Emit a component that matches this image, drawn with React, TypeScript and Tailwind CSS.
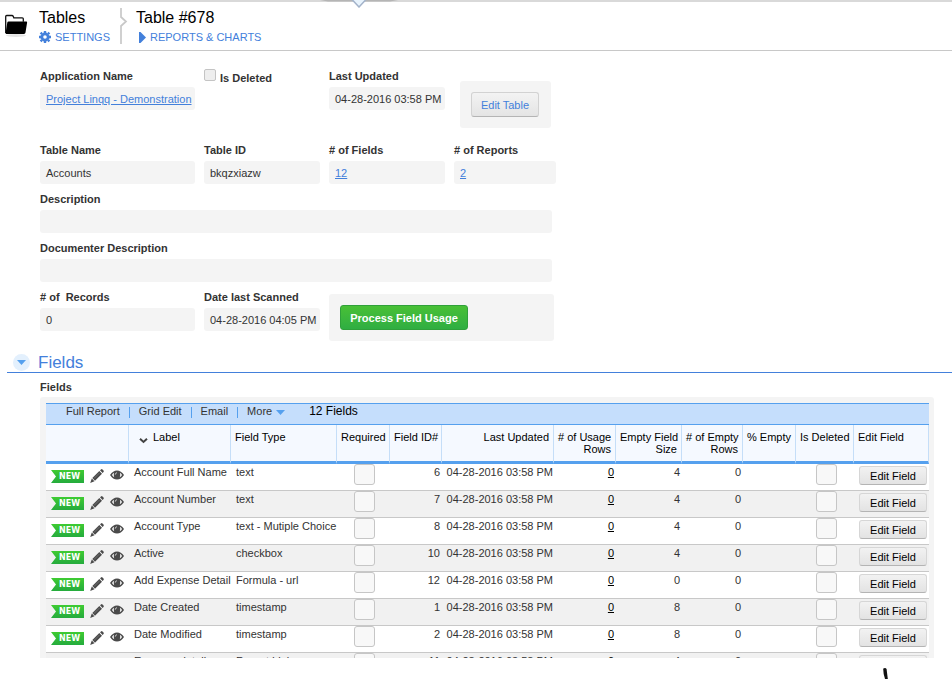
import React from 'react';

interface FieldRow {
  label: string;
  type: string;
  id: number;
  emptySize: number;
}

const UPDATED = '04-28-2016 03:58 PM';

const rows: FieldRow[] = [
  { label: 'Account Full Name', type: 'text', id: 6, emptySize: 4 },
  { label: 'Account Number', type: 'text', id: 7, emptySize: 4 },
  { label: 'Account Type', type: 'text - Mutiple Choice', id: 8, emptySize: 4 },
  { label: 'Active', type: 'checkbox', id: 10, emptySize: 4 },
  { label: 'Add Expense Detail', type: 'Formula - url', id: 12, emptySize: 0 },
  { label: 'Date Created', type: 'timestamp', id: 1, emptySize: 8 },
  { label: 'Date Modified', type: 'timestamp', id: 2, emptySize: 8 },
  { label: 'Expense details', type: 'Report Link', id: 11, emptySize: 4 },
];

const FolderIcon = () => (
  <svg className="w-6 h-6 shrink-0" viewBox="0 0 24 24">
    <ellipse cx="12" cy="22.5" rx="10" ry="1.5" fill="#e4e4e4" />
    <path d="M1.7 20V3.5q0-1 1-1h5.2q1 0 1.4 1l.5 1.3h8.5q1 0 1 1v3" fill="#fff" stroke="#111" strokeWidth="1.3" />
    <path d="M4.5 8.6h17.8q1 0 .8 1l-1.6 10q-.2 1.4-1.5 1.4H2.4q-1 0-.8-1L3.3 9.6q.2-1 1.2-1Z" fill="#000" />
  </svg>
);

const GearIcon = () => (
  <svg className="w-3 h-3 shrink-0" viewBox="0 0 12 12">
    <circle cx="6" cy="6" r="3.2" fill="none" stroke="#4380db" strokeWidth="2.8" />
    <path
      d="M6 0v2M6 10v2M0 6h2M10 6h2M1.6 1.6l1.4 1.4M9 9l1.4 1.4M1.6 10.4l1.4-1.4M9 3l1.4-1.4"
      stroke="#4380db"
      strokeWidth="2.4"
    />
  </svg>
);

const PencilIcon = () => (
  <svg className="w-[14px] h-[14px]" viewBox="0 0 14 14" fill="#4a4a4a">
    <path d="M9.3 2 12 4.700 5 11.700 2.300 9Z" />
    <path d="M10 1.300 11 .4q.8-.7 1.500 0l1 1q.7.8 0 1.500l-.9 1Z" />
    <path d="M1.800 9.500 4.500 12.200.2 13.900Z" />
    <path d="M4 9.500 9.500 4" stroke="#8a8a8a" strokeWidth=".6" />
  </svg>
);

const EyeIcon = () => (
  <svg className="w-[14px] h-[10px]" viewBox="0 0 14 10">
    <path d="M0 5Q3 .4 7 .4T14 5Q11 9.600 7 9.600T0 5Z" fill="#4a4a4a" />
    <path d="M2 5Q2.700 3.600 4 2.800 3.400 5 4.200 7.300 2.700 6.400 2 5ZM12 5Q11.300 3.600 10 2.800 10.600 5 9.800 7.300 11.300 6.400 12 5Z" fill="#fff" />
    <path d="M5.300 4.600Q5.300 3 6.900 2.700" stroke="#ddd" strokeWidth=".9" fill="none" />
  </svg>
);

const NewBadge = () => (
  <span className="relative block w-[33px] h-[13px]">
    <svg className="absolute inset-0 w-full h-full" viewBox="0 0 33 13">
      <defs>
        <linearGradient id="ribbon" x1="0" y1="0" x2="0" y2="1">
          <stop offset="0" stopColor="#3ecb32" />
          <stop offset="1" stopColor="#25ab3d" />
        </linearGradient>
      </defs>
      <path d="M0 0H33V13H0L5 6.500Z" fill="url(#ribbon)" />
    </svg>
    <span className="relative block pl-2 text-[8px] leading-[14px] font-bold text-white font-['DejaVu_Sans',sans-serif]">
      NEW
    </span>
  </span>
);

const CaretDown: React.FC<{ className?: string }> = ({ className }) => (
  <svg className={className} viewBox="0 0 9 5" fill="#55a0ee">
    <path d="M0 0H9L4.500 5Z" />
  </svg>
);

const Separator = () => <span className="mx-[9px] mt-[3px] h-[11px] w-px bg-[#55a0ee]" />;

const Field: React.FC<{ label: string; className?: string; children?: React.ReactNode }> = ({
  label,
  className = '',
  children,
}) => (
  <div className={className}>
    <div className="leading-[14px] font-bold whitespace-pre">{label}</div>
    <div className="mt-1 h-[23px] rounded-[3px] bg-[#f4f4f4] px-[6px] leading-[24px] whitespace-nowrap">{children}</div>
  </div>
);

const TableCheckbox: React.FC<{ label: string }> = ({ label }) => (
  <input
    type="checkbox"
    aria-label={label}
    className="block mx-auto w-[21px] h-[21px] appearance-none rounded-[3px] border border-[#c6c6c6] bg-[#f8f8f8]"
  />
);

const th = 'h-[39px] pt-[6px] px-1 align-top font-normal leading-[12px] text-black whitespace-nowrap border-r border-r-[#c5def8] border-b-3 border-b-[#55a0ee] bg-[#f5f9ff]';
const td = 'h-[27px] p-0 align-top leading-[16px] whitespace-nowrap border-b border-[#c8c8c8]';
const link = 'text-[#4380db] underline';

export default function App() {
  return (
    <div className="overflow-hidden bg-white text-[11px] text-[#333] font-['Liberation_Sans',Arial,sans-serif]">
      <header className="relative flex h-[51px] border-t-2 border-t-[#d9d9d9] border-b border-b-[#c8c8c8] pl-1">
        <svg className="absolute left-[320px] -top-[2px] w-[78px] h-2" viewBox="0 0 78 8">
          <path d="M0 0H78L70 1.500H8Z" fill="#b5b5b5" />
          <path d="M31.500 -1 39 7 46.500 -1Z" fill="#e8f3fc" stroke="#a3b3ca" strokeWidth="1.500" />
        </svg>
        <div className="mt-[11px]">
          <FolderIcon />
        </div>
        <div className="ml-[11px] w-[81px] pt-[6px]">
          <h1 className="text-base leading-[20px] text-black">Tables</h1>
          <a href="#settings" className="mt-[1px] flex items-center gap-1 leading-[16px] text-[#4380db]">
            <GearIcon />
            SETTINGS
          </a>
        </div>
        <svg className="mt-[6px] w-2 h-9 shrink-0" viewBox="0 0 8 36" fill="none">
          <path d="M1 0V9L6 13.500 1 18V36" stroke="#c8c8c8" strokeWidth="1.700" />
        </svg>
        <div className="ml-2 pt-[6px]">
          <h2 className="text-base leading-[20px] text-black">Table #678</h2>
          <a href="#reports" className="mt-[1px] flex items-center gap-1 pl-[3px] leading-[16px] text-[#4380db]">
            <svg className="w-[7px] h-[11px]" viewBox="0 0 7 11" fill="#4380db">
              <path d="M0 0H1.500L7 5.500 1.500 11H0Z" />
            </svg>
            REPORTS &amp; CHARTS
          </a>
        </div>
      </header>

      <main>
        <section className="pt-[18px] pl-10">
          <div className="flex items-start gap-[9px]">
            <Field label="Application Name" className="w-[155px]">
              <a href="#application" className={link}>Project Linqq - Demonstration</a>
            </Field>
            <label className="flex w-[116px] items-start gap-1 font-bold leading-[18px]">
              <input
                type="checkbox"
                className="w-3 h-3 appearance-none rounded-[2px] border border-[#c4c4c4] bg-[#eeeeee]"
              />
              Is Deleted
            </label>
            <Field label="Last Updated" className="w-[116px]">{UPDATED}</Field>
            <div className="mt-3 ml-[6px] rounded-[3px] bg-[#f4f4f4] p-[11px] pr-3">
              <button
                type="button"
                className="block h-[25px] w-[68px] rounded-[3px] border border-[#d2d2d2] border-b-[#b4b4b4] bg-linear-to-b from-[#f3f3f3] to-[#e4e4e4] pt-px text-[#4380db]"
              >
                Edit Table
              </button>
            </div>
          </div>

          <div className="mt-[15px] flex gap-[9px]">
            <Field label="Table Name" className="w-[155px]">Accounts</Field>
            <Field label="Table ID" className="w-[116px]">bkqzxiazw</Field>
            <Field label="# of Fields" className="w-[116px]">
              <a href="#fields" className={link}>12</a>
            </Field>
            <Field label="# of Reports" className="w-[102px]">
              <a href="#reports" className={link}>2</a>
            </Field>
          </div>

          <Field label="Description" className="mt-2 max-w-[512px]" />
          <Field label="Documenter Description" className="mt-2 max-w-[512px]" />

          <div className="mt-2 flex items-start gap-[9px]">
            <Field label="# of  Records" className="w-[155px]">0</Field>
            <Field label="Date last Scanned" className="w-[116px]">04-28-2016 04:05 PM</Field>
            <div className="mt-1 w-[225px] rounded-[3px] bg-[#f4f4f4] p-[11px]">
              <button
                type="button"
                className="block h-[25px] w-[128px] rounded-[3px] border border-[#2fa03a] bg-linear-to-b from-[#48c035] to-[#2fae42] pt-px font-bold text-white"
              >
                Process Field Usage
              </button>
            </div>
          </div>
        </section>

        <section>
          <div className="mt-3 ml-[7px] flex h-5 items-center gap-2 border-b border-[#4380db] pl-[6px]">
            <button
              type="button"
              aria-label="Collapse Fields"
              className="flex h-[17px] w-[17px] items-center justify-center rounded-full bg-[#e3f0fd]"
            >
              <CaretDown className="w-[9px] h-[5px]" />
            </button>
            <h2 className="text-[17px] leading-[18px] text-[#4380db]">Fields</h2>
          </div>

          <h3 className="mt-[7px] pl-10 leading-[14px] font-bold">Fields</h3>
          <div className="mt-[3px] ml-10 mr-[18px] max-h-[261px] overflow-hidden rounded-t-[3px] bg-[#f4f4f4] pt-[6px] pl-[6px] pr-[5px]">
            <div className="flex h-[22px] border-y border-[#55a0ee] bg-[#c5defc] pl-5 leading-[15px]">
              <a href="#full-report">Full Report</a>
              <Separator />
              <a href="#grid-edit">Grid Edit</a>
              <Separator />
              <a href="#email">Email</a>
              <Separator />
              <button type="button" className="flex h-[15px] gap-1">
                More
                <CaretDown className="mt-[6px] w-[9px] h-[5px]" />
              </button>
              <span className="ml-6 text-xs leading-[15px] text-black">12 Fields</span>
            </div>

            <table className="w-full table-fixed border-separate border-spacing-0 bg-white">
              <colgroup>
                <col className="w-[83px]" />
                <col className="w-[102px]" />
                <col className="w-[106px]" />
                <col className="w-[53px]" />
                <col className="w-[52px]" />
                <col className="w-[112px]" />
                <col className="w-[62px]" />
                <col className="w-[66px]" />
                <col className="w-[61px]" />
                <col className="w-[53px]" />
                <col className="w-[58px]" />
                <col className="w-[75px]" />
              </colgroup>
              <thead>
                <tr>
                  <th className={th} aria-label="Actions" />
                  <th className={`${th} text-left`}>
                    <span className="flex gap-[5px] pl-[6px]">
                      <svg className="mt-[7px] w-[9px] h-[6px]" viewBox="0 0 9 6">
                        <path d="M1 .8 4.500 4 8 .8" fill="none" stroke="#444" strokeWidth="2" />
                      </svg>
                      Label
                    </span>
                  </th>
                  <th className={`${th} text-left`}>Field Type</th>
                  <th className={`${th} text-center`}>Required</th>
                  <th className={`${th} text-right`}>Field ID#</th>
                  <th className={`${th} text-right`}>Last Updated</th>
                  <th className={`${th} text-right`}># of Usage<br />Rows</th>
                  <th className={`${th} text-right`}>Empty Field<br />Size</th>
                  <th className={`${th} text-right`}># of Empty<br />Rows</th>
                  <th className={`${th} text-right`}>% Empty</th>
                  <th className={`${th} text-center`}>Is Deleted</th>
                  <th className={`${th} text-left`}>Edit Field</th>
                </tr>
              </thead>
              <tbody>
                {rows.map((row) => (
                  <tr key={row.label} className="even:bg-[#f1f1f1]">
                    <td className={td}>
                      <div className="flex h-[26px] items-start pt-[5px] pl-[5px]">
                        <span className="mt-[1px]">
                          <NewBadge />
                        </span>
                        <a href="#edit" aria-label={`Edit ${row.label}`} className="ml-[6px]">
                          <PencilIcon />
                        </a>
                        <a href="#view" aria-label={`View ${row.label}`} className="ml-[6px] mt-[1px]">
                          <EyeIcon />
                        </a>
                      </div>
                    </td>
                    <td className={`${td} pl-[5px]`}>{row.label}</td>
                    <td className={`${td} pl-[5px]`}>{row.type}</td>
                    <td className={`${td} pl-[2px]`}>
                      <TableCheckbox label={`${row.label} required`} />
                    </td>
                    <td className={`${td} pr-[2px] text-right`}>{row.id}</td>
                    <td className={`${td} pr-px text-right`}>{UPDATED}</td>
                    <td className={`${td} pr-[2px] text-right`}>
                      <a href="#usage" className="text-black underline">0</a>
                    </td>
                    <td className={`${td} pr-[2px] text-right`}>{row.emptySize}</td>
                    <td className={`${td} pr-[2px] text-right`}>0</td>
                    <td className={td} />
                    <td className={`${td} pl-[2px]`}>
                      <TableCheckbox label={`${row.label} is deleted`} />
                    </td>
                    <td className={`${td} pl-[5px]`}>
                      <button
                        type="button"
                        className="mt-[2px] block h-[19px] w-[68px] rounded-[3px] border border-[#d6d6d6] border-b-[#b4b4b4] bg-linear-to-b from-[#f2f2f2] to-[#e3e3e3] leading-[18px] text-black"
                      >
                        Edit Field
                      </button>
                    </td>
                  </tr>
                ))}
              </tbody>
            </table>
          </div>
        </section>
      </main>

      <div className="flex justify-end pt-[10px] pr-16">
        <svg className="w-[5px] h-[11px]" viewBox="0 0 5 11">
          <path d="M.3 .5Q2.500 -.6 3.600 1L4.800 11H2Q0 5 .3 .5Z" fill="#111" />
        </svg>
      </div>
    </div>
  );
}
